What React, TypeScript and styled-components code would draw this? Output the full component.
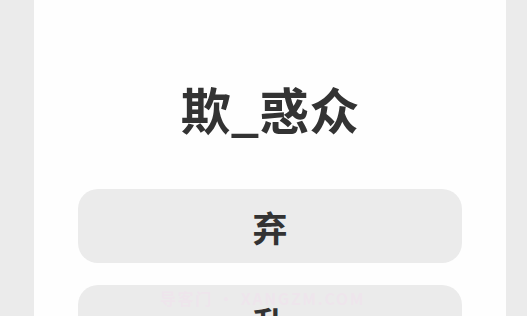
import styled, { createGlobalStyle } from "styled-components";

const GlobalStyle = createGlobalStyle`
  html, body {
    margin: 0;
    padding: 0;
    background: #ebebeb;
    font-family: "Noto Sans CJK SC", "Noto Sans", sans-serif;
    overflow: hidden;
  }
`;

const Page = styled.div`
  width: 527px;
  height: 316px;
  overflow: hidden;
  background: #ebebeb;
`;

const Card = styled.main`
  margin-left: 34px;
  width: 472px;
  min-height: 400px;
  background: #fefefe;
  padding: 82px 44px 0 44px;
  box-sizing: border-box;
  display: flex;
  flex-direction: column;
`;

const Title = styled.h1`
  margin: 0;
  text-align: center;
  font-size: 50px;
  line-height: 52px;
  font-weight: 700;
  color: #333333;
  letter-spacing: 0;
`;

const Options = styled.div`
  margin-top: 55px;
  display: flex;
  flex-direction: column;
  gap: 22px;
`;

const Option = styled.button`
  position: relative;
  height: 74px;
  border: none;
  border-radius: 20px;
  background: #ebebeb;
  color: #333333;
  font-family: inherit;
  font-size: 35px;
  font-weight: 700;
  display: flex;
  align-items: center;
  justify-content: center;
  padding: 0;
`;

const Watermark = styled.span`
  position: absolute;
  top: 1px;
  left: 82px;
  font-size: 16px;
  font-weight: 700;
  letter-spacing: 1.6px;
  color: rgba(248, 215, 242, 0.3);
  pointer-events: none;
`;

const options = ["弃", "乱"];

export default function App() {
  return (
    <Page>
      <GlobalStyle />
      <Card>
        <Title>欺_惑众</Title>
        <Options>
          {options.map((o, i) => (
            <Option key={o}>
              {i === 1 && <Watermark>导客门 • XANGZM.COM</Watermark>}
              {o}
            </Option>
          ))}
        </Options>
      </Card>
    </Page>
  );
}
